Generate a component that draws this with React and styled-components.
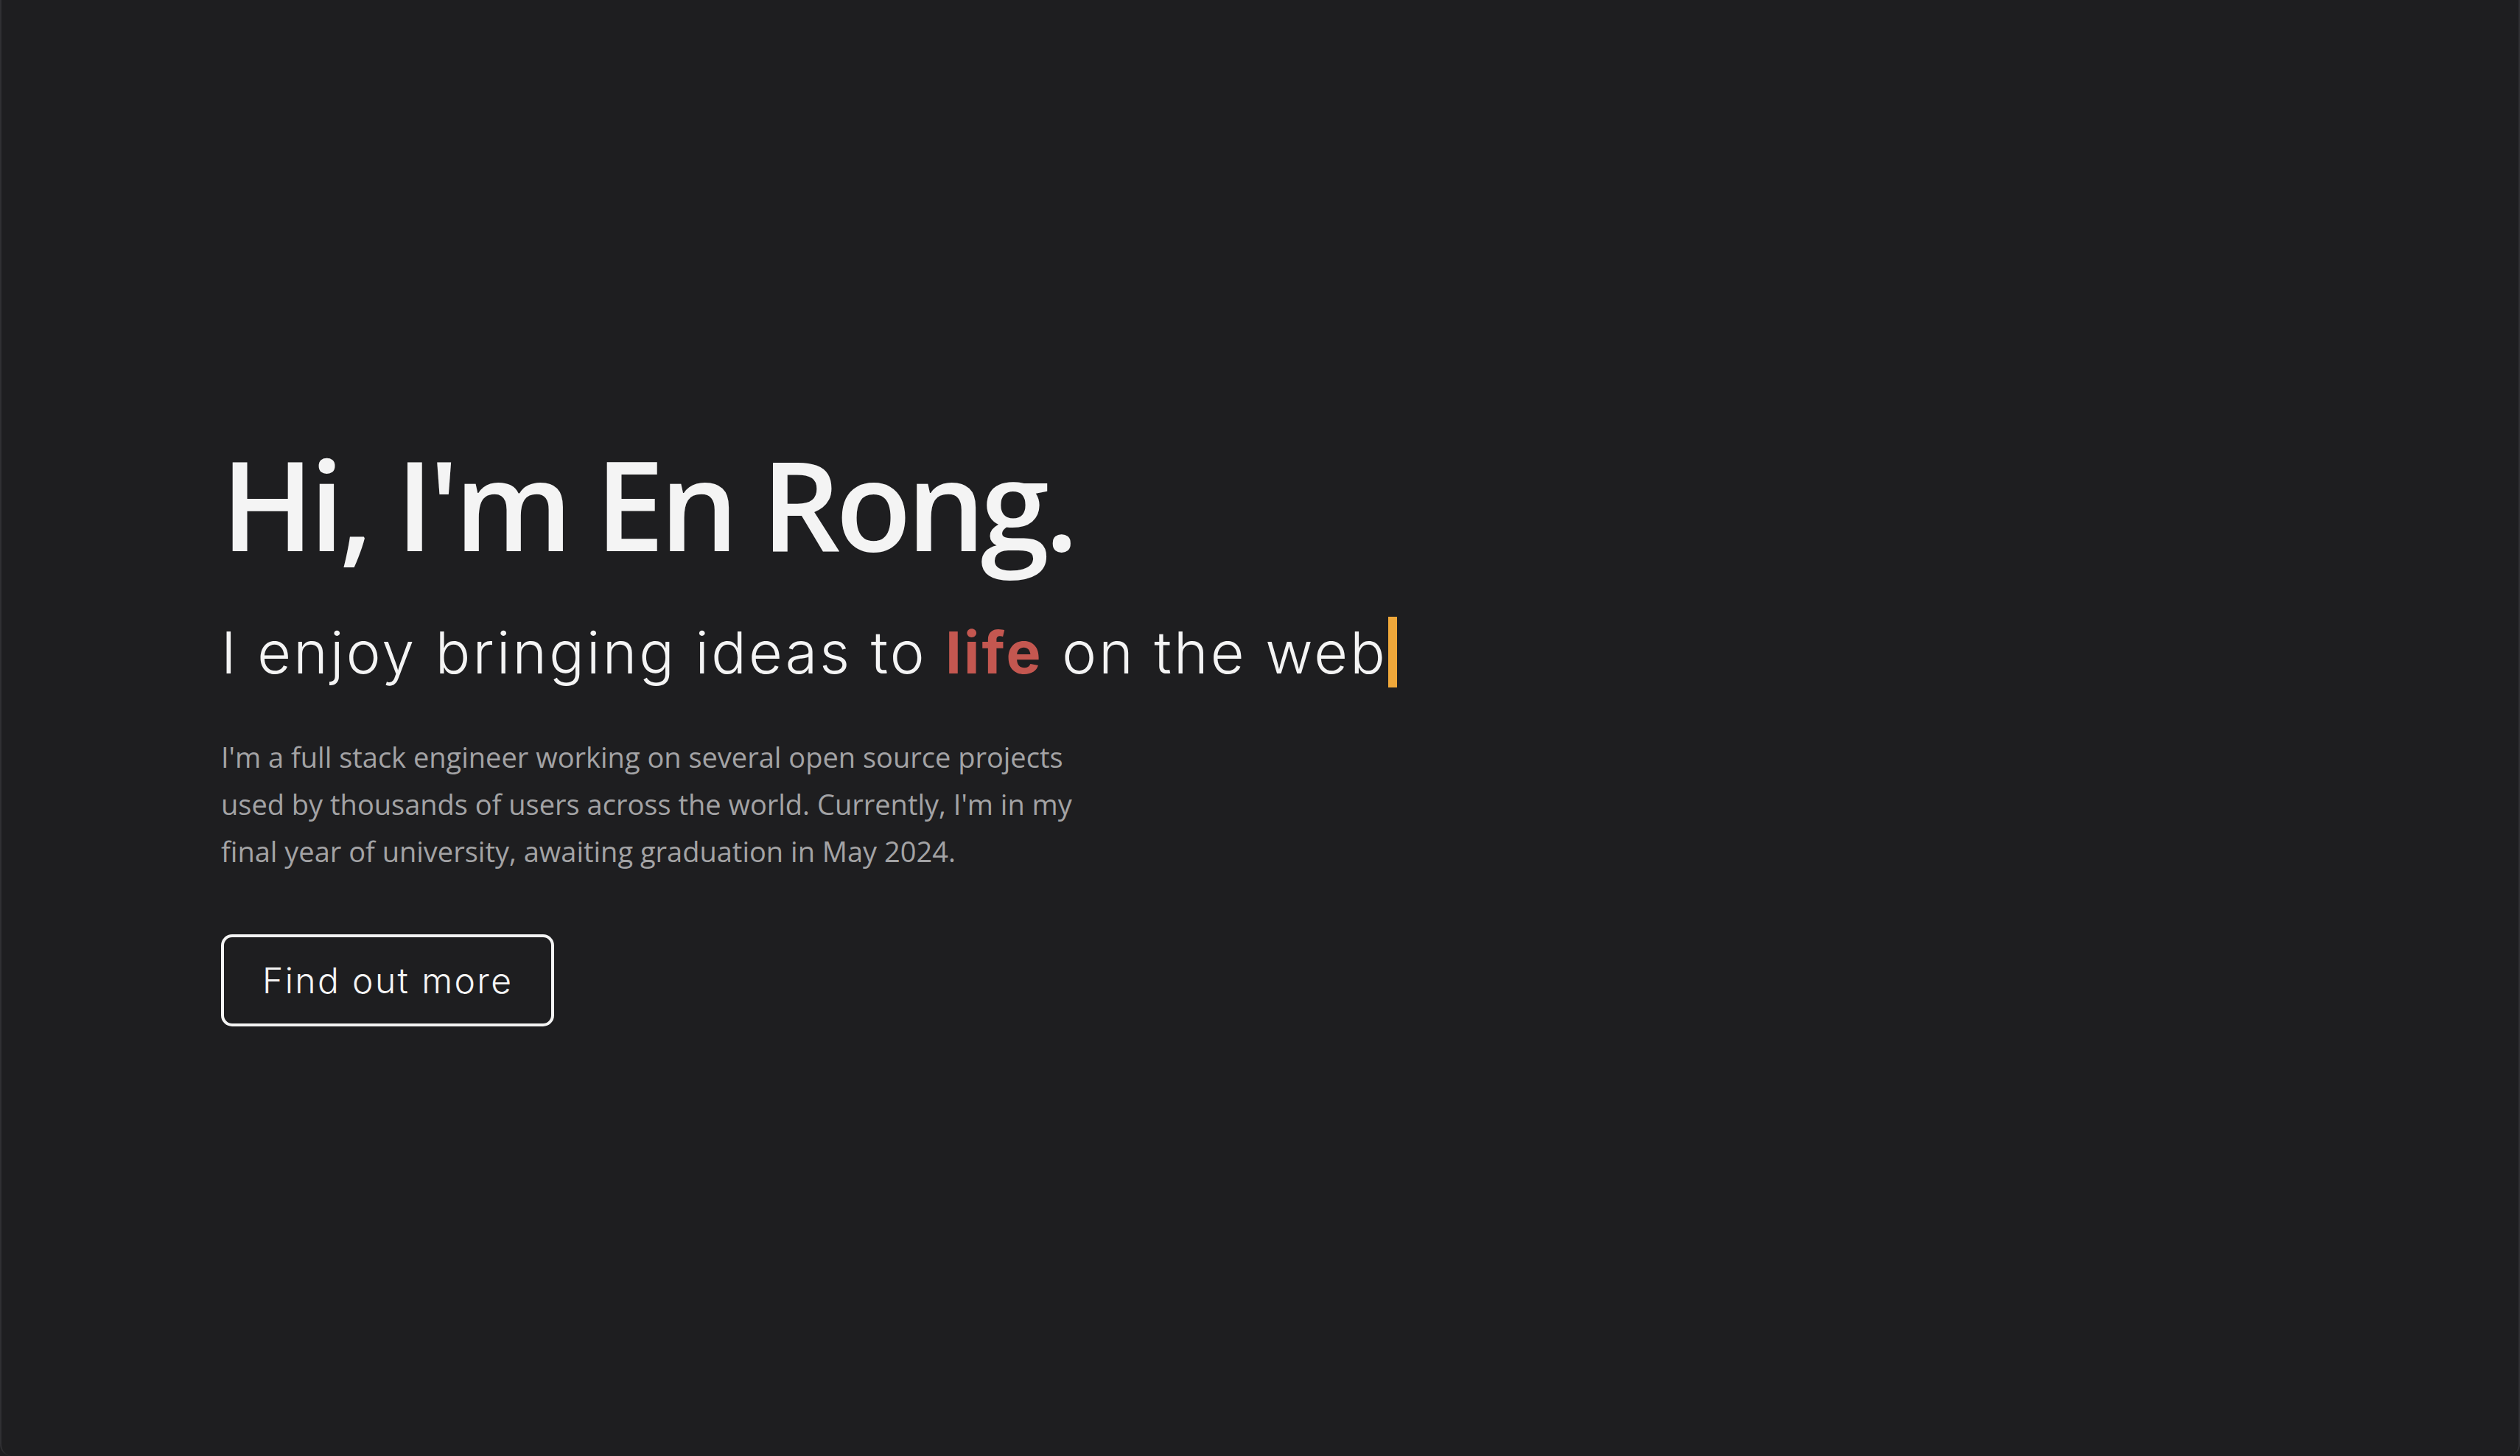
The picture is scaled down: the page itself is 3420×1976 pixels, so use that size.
import React from 'react';
import styled, { createGlobalStyle } from 'styled-components';

const GlobalStyle = createGlobalStyle`
    html, body {
        margin: 0;
        padding: 0;
        background: #1e1e20;
    }
    * { box-sizing: border-box; }
`;

const Window = styled.main`
    width: 3420px;
    height: 1976px;
    background: #1e1e20;
    border-left: 2px solid #303033;
    border-right: 2px solid #303033;
    border-radius: 0 0 16px 16px;
    display: flex;
    flex-direction: column;
    padding: 582px 0 0 298px;
`;

const Hero = styled.section`
    display: flex;
    flex-direction: column;
    align-items: flex-start;
`;

const Title = styled.h1`
    margin: 0;
    font-family: "Open Sans", sans-serif;
    font-weight: 600;
    font-size: 168px;
    line-height: 1.2;
    letter-spacing: -6.3px;
    color: #f4f4f4;
`;

const Tagline = styled.h2`
    margin: 51px 0 0;
    height: 100px;
    display: flex;
    align-items: center;
    font-family: Inter, "Noto Sans", sans-serif;
    font-weight: 300;
    font-size: 79px;
    line-height: 100px;
    letter-spacing: 3.2px;
    color: #f4f4f4;
    white-space: pre;

    strong {
        font-weight: 700;
        color: #c45750;
    }
`;

const Caret = styled.span`
    display: inline-block;
    width: 12px;
    height: 96px;
    margin-left: 1px;
    background: #f0a83a;
`;

const Blurb = styled.p`
    margin: 60px 0 0;
    max-width: 1180px;
    font-family: "Open Sans", sans-serif;
    font-size: 38px;
    line-height: 64px;
    color: #a3a3a5;
`;

const MoreButton = styled.button`
    margin-top: 81px;
    height: 125px;
    padding: 0 52px;
    background: transparent;
    border: 4px solid #f4f4f4;
    border-radius: 15px;
    font-family: Inter, "Noto Sans", sans-serif;
    font-weight: 300;
    font-size: 48px;
    letter-spacing: 2.4px;
    color: #f4f4f4;
    cursor: pointer;
`;

const App = () => {
    return (
        <>
            <GlobalStyle />
            <Window>
                <Hero>
                    <Title>Hi, I'm En Rong.</Title>
                    <Tagline>
                        <span>I enjoy bringing ideas to <strong>life</strong> on the web</span>
                        <Caret />
                    </Tagline>
                    <Blurb>
                        I'm a full stack engineer working on several open source projects
                        used by thousands of users across the world. Currently, I'm in my
                        final year of university, awaiting graduation in May 2024.
                    </Blurb>
                    <MoreButton>Find out more</MoreButton>
                </Hero>
            </Window>
        </>
    )
}

export default App
